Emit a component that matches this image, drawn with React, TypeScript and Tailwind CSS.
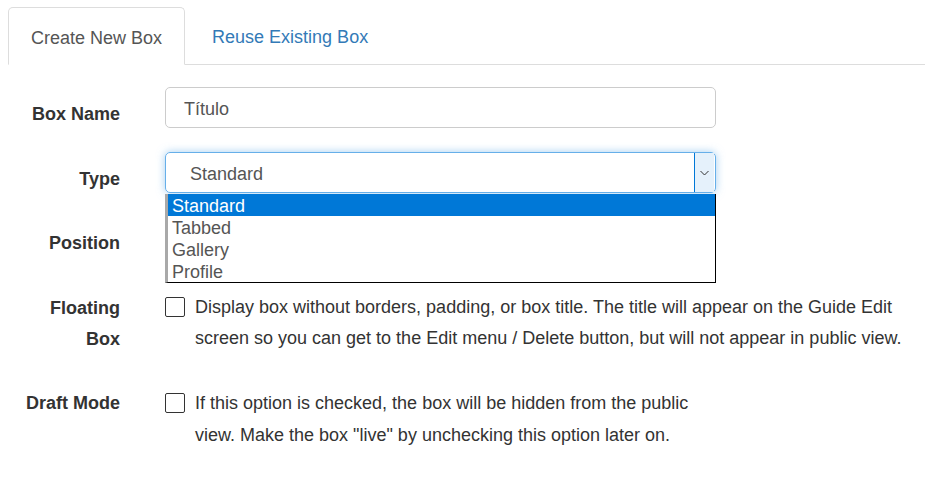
import React from 'react';

const font = "font-['Liberation_Sans',Arial,sans-serif]";

const Label: React.FC<{ children: React.ReactNode; pad?: string }> = ({ children, pad = 'h-[41px] pt-[11px]' }) => (
  <div className={`w-[120px] shrink-0 ${pad} text-right text-[18px] font-bold leading-[31px] text-[#333]`}>
    {children}
  </div>
);

const Checkbox: React.FC<{ top?: string }> = ({ top = 'mt-[15px]' }) => (
  <div className={`${top} h-[20px] w-[20px] shrink-0 rounded-[2px] border border-[#333] bg-white`} />
);

export default function App() {
  const options = ['Standard', 'Tabbed', 'Gallery', 'Profile'];

  return (
    <div className={`${font} min-h-[503px] w-full bg-white text-[#333]`}>
      {/* Tabs */}
      <div className="pl-[8px] pt-[7px]">
        <div className="flex border-b border-[#ddd]">
          <div className="-mb-px h-[58px] rounded-t-[5px] border border-b-white border-[#ddd] bg-white px-[22px] text-[18px] leading-[60px] text-[#555]">
            Create New Box
          </div>
          <div className="ml-[2px] h-[57px] px-[25px] text-[18px] leading-[61px] text-[#337ab7]">
            Reuse Existing Box
          </div>
        </div>
      </div>

      {/* Form */}
      <div className="mt-[22px] flex flex-col gap-[24px]">
        <div className="flex gap-[45px]">
          <Label pad="h-[41px] pt-[12px]">Box Name</Label>
          <div className="flex h-[41px] w-[551px] items-center rounded-[5px] border border-[#ccc] pl-[18px] pt-[3px] text-[18px] text-[#555]">
            Título
          </div>
        </div>

        <div className="flex gap-[45px]">
          <Label pad="h-[41px] pt-[12px]">Type</Label>
          <div className="relative w-[551px]">
            <div className="flex h-[41px] items-center rounded-[5px] border border-[#66afe9] shadow-[0_0_8px_rgba(102,175,233,0.6)]">
              <div className="flex-1 pl-[24px] pt-[3px] text-[18px] text-[#555]">Standard</div>
              <div className="mr-px flex h-[39px] w-[20px] items-center justify-center border-l border-[#0078d7] bg-[#e5f1fb]">
                <svg width="9" height="6" viewBox="0 0 9 6" fill="none">
                  <path d="M0.5 1l4 4 4-4" stroke="#333" strokeWidth="1" />
                </svg>
              </div>
            </div>
            <div className="absolute left-0 top-[42px] z-10 w-[551px] border-b border-r border-black border-l-[3px] border-l-[#a9a9a9] bg-white">
              {options.map((o, i) => (
                <div
                  key={o}
                  className={`h-[22px] pl-[4px] pt-[3px] text-[18px] leading-[19px] ${
                    i === 0 ? 'bg-[#0078d7] text-white' : 'text-[#555]'
                  }`}
                >
                  {o}
                </div>
              ))}
            </div>
          </div>
        </div>

        <div className="flex gap-[45px]">
          <Label>Position</Label>
          <div className="h-[41px] w-[551px]" />
        </div>

        <div className="flex gap-[45px] pr-[12px]">
          <Label pad="pt-[11px]">
            Floating
            <br />
            Box
          </Label>
          <div className="flex flex-1 gap-[10px]">
            <Checkbox />
            <div className="flex-1 pt-[10px] text-[18px] leading-[31px] text-[#333]">
              Display box without borders, padding, or box title. The title will appear on the Guide Edit screen so you can get to the Edit menu / Delete button, but will not appear in public view.
            </div>
          </div>
        </div>

        <div className="-mt-[2px] flex gap-[45px]">
          <Label pad="pt-[11px]">Draft Mode</Label>
          <div className="flex gap-[10px]">
            <Checkbox top="mt-[16px]" />
            <div className="w-[515px] pt-[10px] text-[18px] leading-[32px] text-[#333]">
              If this option is checked, the box will be hidden from the public view. Make the box "live" by unchecking this option later on.
            </div>
          </div>
        </div>
      </div>
    </div>
  );
}
